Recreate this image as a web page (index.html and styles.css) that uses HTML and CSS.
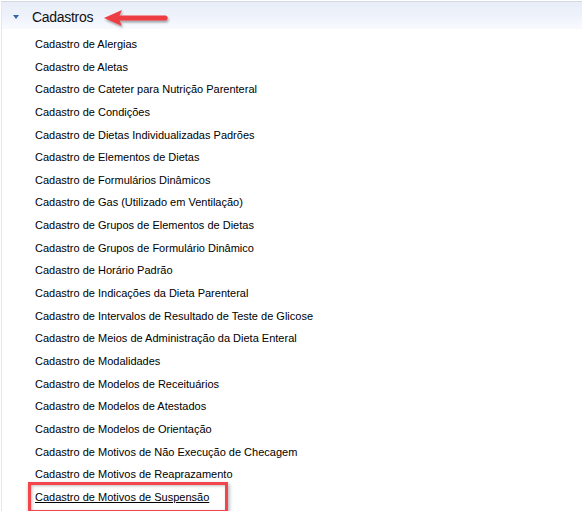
FILE: index.html
```html
<!DOCTYPE html>
<html lang="pt-BR">
<head>
<meta charset="utf-8">
<title>Cadastros</title>
<link rel="stylesheet" href="styles.css">
</head>
<body>
<div class="panel">
  <div class="header">
    <span class="caret"></span>
    <span class="title">Cadastros</span>
    <svg class="arrow" width="74" height="26" viewBox="0 0 74 26" aria-hidden="true">
      <defs>
        <filter id="sh" x="-20%" y="-50%" width="140%" height="200%">
          <feDropShadow dx="1" dy="2" stdDeviation="1.3" flood-color="#000" flood-opacity="0.35"/>
        </filter>
      </defs>
      <g filter="url(#sh)">
        <path d="M2 11 L20 3 L17.5 8.5 L64 8.5 Q67.5 11 64 13.5 L17.5 13.5 L20 19 Z" fill="#ee3c42"/>
      </g>
    </svg>
  </div>
  <ul class="list">
    <li>Cadastro de Alergias</li>
    <li>Cadastro de Aletas</li>
    <li>Cadastro de Cateter para Nutrição Parenteral</li>
    <li>Cadastro de Condições</li>
    <li>Cadastro de Dietas Individualizadas Padrões</li>
    <li>Cadastro de Elementos de Dietas</li>
    <li>Cadastro de Formulários Dinâmicos</li>
    <li>Cadastro de Gas (Utilizado em Ventilação)</li>
    <li>Cadastro de Grupos de Elementos de Dietas</li>
    <li>Cadastro de Grupos de Formulário Dinâmico</li>
    <li>Cadastro de Horário Padrão</li>
    <li>Cadastro de Indicações da Dieta Parenteral</li>
    <li>Cadastro de Intervalos de Resultado de Teste de Glicose</li>
    <li>Cadastro de Meios de Administração da Dieta Enteral</li>
    <li>Cadastro de Modalidades</li>
    <li>Cadastro de Modelos de Receituários</li>
    <li>Cadastro de Modelos de Atestados</li>
    <li>Cadastro de Modelos de Orientação</li>
    <li>Cadastro de Motivos de Não Execução de Checagem</li>
    <li>Cadastro de Motivos de Reaprazamento</li>
    <li class="active"><span class="link">Cadastro de Motivos de Suspensão</span></li>
  </ul>
</div>
</body>
</html>
```

FILE: styles.css
```css
html, body {
  margin: 0;
  padding: 0;
  background: #ffffff;
}

body {
  font-family: "Liberation Sans", Arial, sans-serif;
  color: #000;
  overflow: hidden;
}

.panel {
  margin: 1px 0 0 1px;
  border-top: 1px solid #d3d9e3;
  border-left: 1px solid #e3e8f0;
  height: 510px;
  box-sizing: border-box;
}

.header {
  position: relative;
  height: 27px;
  display: flex;
  align-items: center;
  background: linear-gradient(to bottom, #e8edf8 0%, #eef2fa 50%, #f8fafe 100%);
}

.caret {
  width: 0;
  height: 0;
  margin-left: 11px;
  margin-top: 2px;
  border-left: 3.5px solid transparent;
  border-right: 3.5px solid transparent;
  border-top: 4px solid #2f65a8;
}

.title {
  margin-left: 13px;
  margin-top: 2px;
  font-size: 14px;
  letter-spacing: -0.3px;
  color: #111;
}

.arrow {
  position: absolute;
  left: 100px;
  top: 5px;
}

.list {
  list-style: none;
  margin: 0;
  padding: 4px 0 0 33px;
}

.list li {
  height: 22.65px;
  line-height: 22.65px;
  font-size: 11px;
  white-space: nowrap;
}

.list li.active {
  position: relative;
}

.link {
  text-decoration: underline;
}

.list li.active::after {
  content: "";
  position: absolute;
  left: -7px;
  top: -4px;
  width: 194px;
  height: 25px;
  border: 3.5px solid #f2464c;
  box-shadow: 1px 2px 4px rgba(0, 0, 0, 0.35), inset 1px 1px 3px rgba(0, 0, 0, 0.25);
}
```
